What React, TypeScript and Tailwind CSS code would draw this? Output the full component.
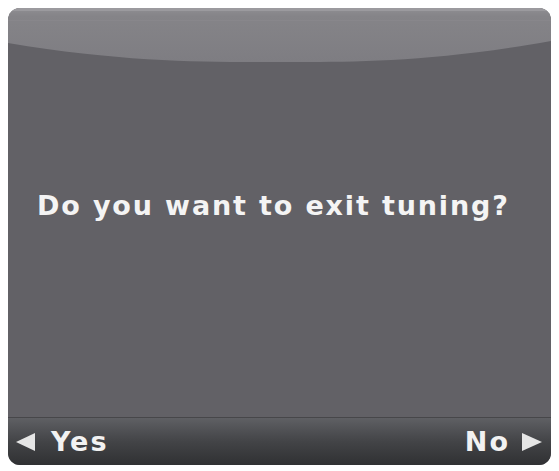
import React from "react";

export default function App() {
  return (
    <div className="w-[559px] h-[471px] bg-white pt-[8px] pl-[8px]" style={{ fontFamily: '"DejaVu Sans", "Liberation Sans", Arial, sans-serif' }}>
      <div className="relative w-[543px] h-[457px] rounded-[12px] overflow-hidden bg-[#626166] flex flex-col">
        <svg className="absolute left-0 top-0" width="543" height="70" viewBox="0 0 543 70" preserveAspectRatio="none">
          <defs>
            <linearGradient id="hl" x1="0" y1="0" x2="0" y2="1">
              <stop offset="0" stopColor="#8f8e92" />
              <stop offset="0.15" stopColor="#858488" />
              <stop offset="1" stopColor="#7e7d82" />
            </linearGradient>
          </defs>
          <path d="M0 0 H543 V33 C420 55 342 54 271 54 C200 54 120 55 0 35 Z" fill="url(#hl)" />
          <rect x="0" y="0" width="543" height="3" fill="#9b9a9e" />
          <rect x="0" y="12" width="543" height="1" fill="#8a898d" opacity="0.6" />
        </svg>
        <div className="relative flex-1 pt-[184px] pl-[29px]">
          <div className="text-[#f4f4f4] font-bold text-[27px] leading-[27px] tracking-[1.85px] whitespace-nowrap">
            Do you want to exit tuning?
          </div>
        </div>
        <div className="h-[48px] border-t border-[#47474a] bg-gradient-to-b from-[#5f6064] via-[#434447] to-[#303133] flex items-center justify-between pl-[8px] pr-[9px] text-[#f2f2f2] font-bold text-[27px] leading-[27px] tracking-[2px]">
          <div className="flex items-center gap-[16px]">
            <svg width="19" height="18" viewBox="0 0 19 18"><path d="M19 0 L0 9 L19 18 Z" fill="#e6e6e6" /></svg>
            <span>Yes</span>
          </div>
          <div className="flex items-center gap-[12px]">
            <span>No</span>
            <svg width="20" height="18" viewBox="0 0 20 18"><path d="M0 0 L20 9 L0 18 Z" fill="#e6e6e6" /></svg>
          </div>
        </div>
      </div>
    </div>
  );
}
